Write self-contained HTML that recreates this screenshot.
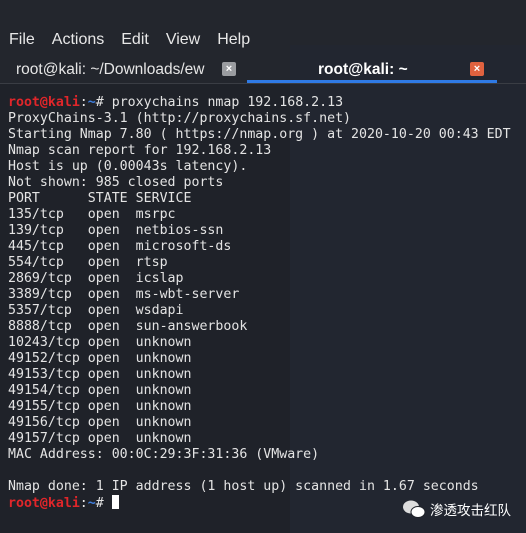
<!DOCTYPE html>
<html><head><meta charset="utf-8"><style>
body{margin:0;width:526px;height:533px;overflow:hidden;background:#1f2229;position:relative;font-family:"Liberation Sans",sans-serif}
.top{position:absolute;left:0;top:0;width:526px;height:84px;background:#23262d}
.menu{position:absolute;top:31px;left:9px;color:#e8e8e8;font-size:16px}
.menu span{margin-right:17px}
.tab1{position:absolute;top:61px;left:16px;color:#e6e6e6;font-size:15.5px}
.tab2{position:absolute;top:61px;left:318px;color:#fff;font-size:15.5px;font-weight:bold}
.x{position:absolute;width:14px;height:14px;border-radius:2px;color:#fff;font-size:11px;line-height:14px;text-align:center;font-weight:bold}
.blue{position:absolute;left:247px;top:80px;width:250px;height:4px;background:#2f7ae5}
.div{position:absolute;left:0;top:83px;width:526px;height:1px;background:#3a3d44}
.ghost{position:absolute;left:290px;top:45px;width:236px;height:488px;background:#222630}
pre{position:absolute;left:8px;top:95px;margin:0;font-family:"DejaVu Sans Mono","Liberation Mono",monospace;font-size:13.25px;line-height:16px;color:#e4e4e4}
.r{color:#e0262a;font-weight:bold}.b{color:#3f7fe0;font-weight:bold}
.cur{display:inline-block;width:7px;height:14px;background:#fff;vertical-align:-2px}
.wm{position:absolute;top:499px;color:#fff;font-size:13.5px;font-family:"Liberation Sans","Noto Sans CJK SC",sans-serif}
</style></head><body>
<div class="top"></div>
<div class="ghost"></div>
<div class="menu"><span>File</span><span>Actions</span><span>Edit</span><span>View</span><span>Help</span></div>
<div class="tab1">root@kali: ~/Downloads/ew</div>
<div class="x" style="left:222px;top:62px;background:#9a9ca0">×</div>
<div class="tab2">root@kali: ~</div>
<div class="x" style="left:470px;top:62px;background:#e0623f">×</div>
<div class="blue"></div><div class="div"></div>
<pre><span class="r">root@kali</span>:<span class="b">~</span># proxychains nmap 192.168.2.13
ProxyChains-3.1 (http://proxychains.sf.net)
Starting Nmap 7.80 ( https://nmap.org ) at 2020-10-20 00:43 EDT
Nmap scan report for 192.168.2.13
Host is up (0.00043s latency).
Not shown: 985 closed ports
PORT      STATE SERVICE
135/tcp   open  msrpc
139/tcp   open  netbios-ssn
445/tcp   open  microsoft-ds
554/tcp   open  rtsp
2869/tcp  open  icslap
3389/tcp  open  ms-wbt-server
5357/tcp  open  wsdapi
8888/tcp  open  sun-answerbook
10243/tcp open  unknown
49152/tcp open  unknown
49153/tcp open  unknown
49154/tcp open  unknown
49155/tcp open  unknown
49156/tcp open  unknown
49157/tcp open  unknown
MAC Address: 00:0C:29:3F:31:36 (VMware)

Nmap done: 1 IP address (1 host up) scanned in 1.67 seconds
<span class="r">root@kali</span>:<span class="b">~</span># <span class="cur"></span></pre>
<svg style="position:absolute;left:402px;top:499px" width="24" height="20" viewBox="0 0 24 20"><ellipse cx="9" cy="8" rx="8" ry="6.5" fill="#ddd"/><ellipse cx="16" cy="13" rx="7" ry="5.5" fill="#fff" stroke="#1f2229" stroke-width="1"/></svg>
<div class="wm" style="left:430px">渗透攻击红队</div>
</body></html>
